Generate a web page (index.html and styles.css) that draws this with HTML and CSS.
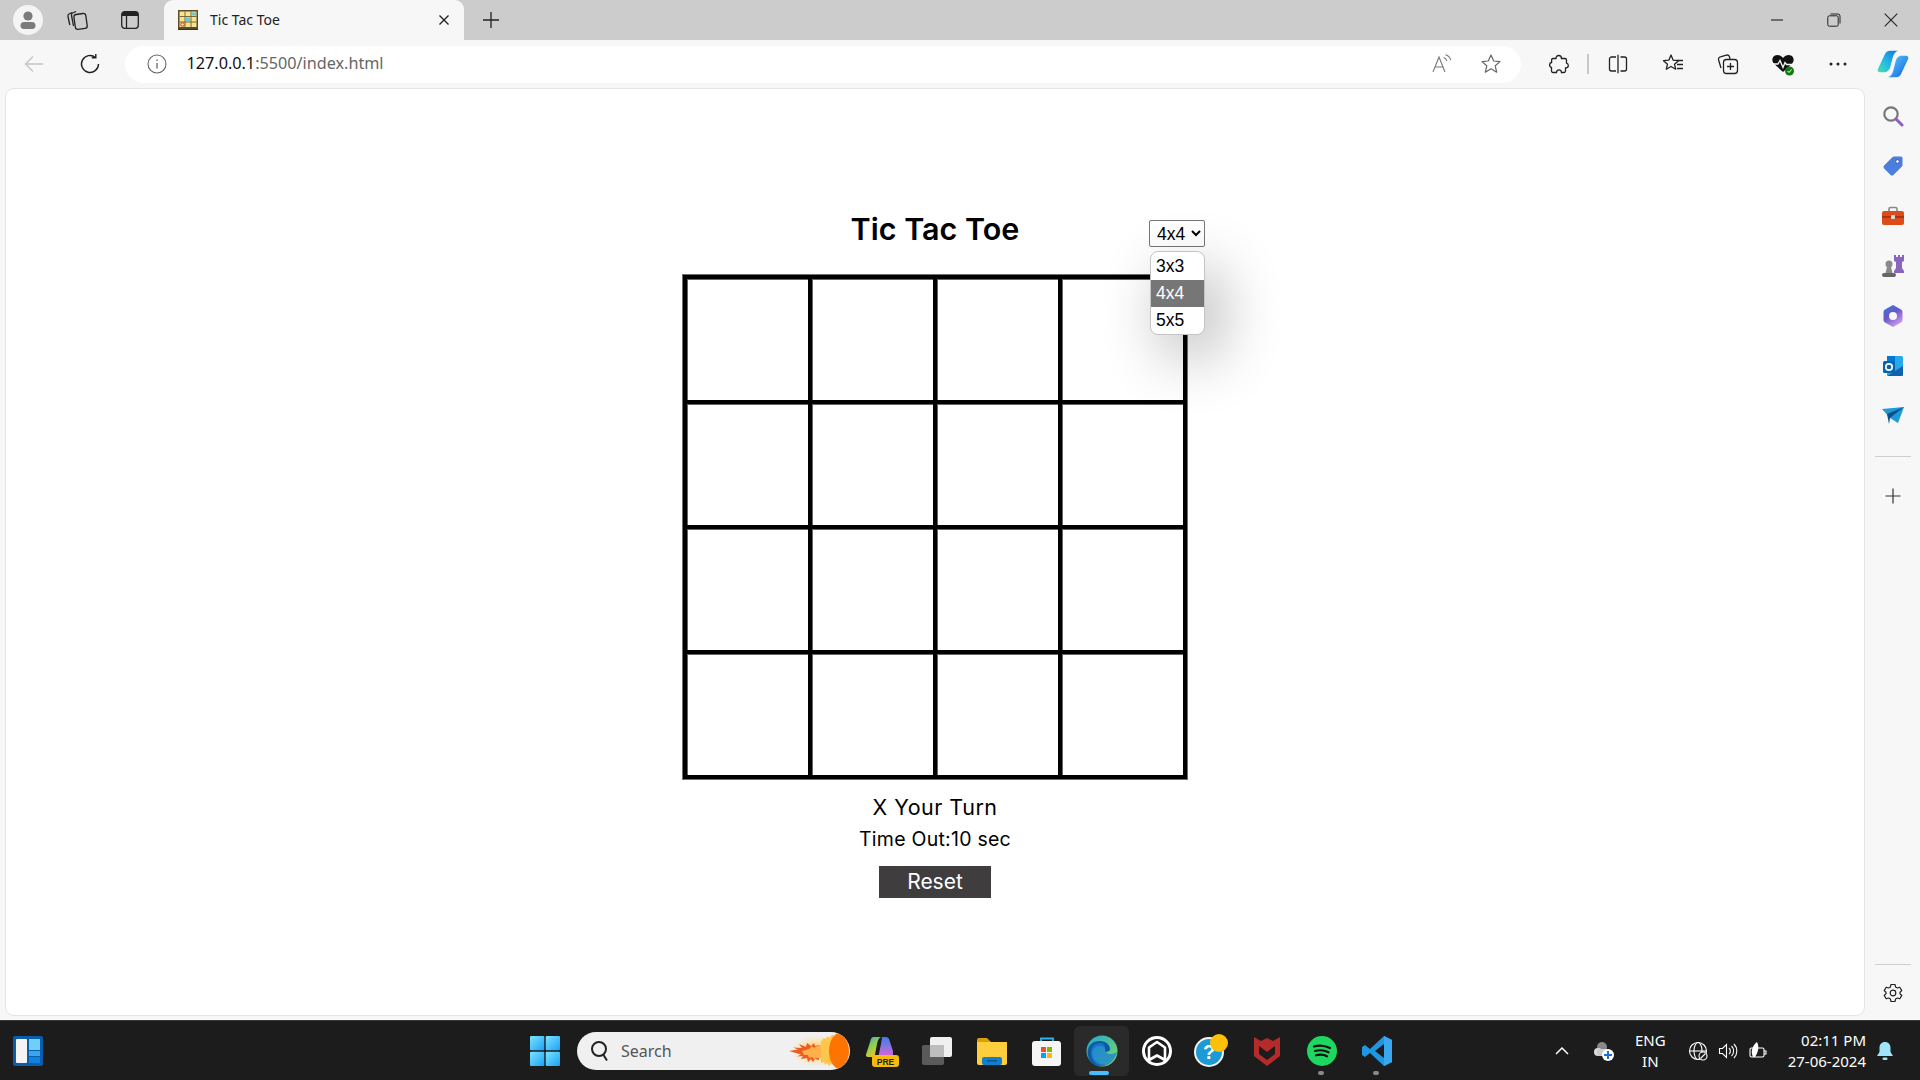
FILE: index.html
```html
<!DOCTYPE html>
<html lang="en">
<head>
<meta charset="utf-8">
<title>Tic Tac Toe</title>
<link rel="stylesheet" href="styles.css">
</head>
<body>
<div class="titlebar">
  <div class="tb-left">
    <span class="tb-btn"><svg width="30" height="30" viewBox="0 0 30 30"><circle cx="15" cy="15" r="15" fill="#f4f4f4"/><circle cx="15" cy="11" r="4.6" fill="#7b7b7b"/><rect x="7.5" y="17" width="15" height="7" rx="3.5" fill="#7b7b7b"/></svg></span>
    <span class="tb-btn"><svg width="22" height="22" viewBox="0 0 22 22" fill="none" stroke="#222" stroke-width="1.3"><path d="M6 3.5 3 5c-1 .5-1.200 1.500-1 2.500l1.800 8.500"/><path d="M10 2.500 6.500 4c-1 .5-1.200 1.500-1 2.500L7.500 17"/><rect x="8.500" y="5" width="12" height="15" rx="2.500" transform="rotate(-8 14 12)"/></svg></span>
    <span class="tb-btn"><svg width="20" height="20" viewBox="0 0 20 20"><rect x="1.700" y="1.700" width="16.600" height="16.600" rx="3" fill="none" stroke="#222" stroke-width="1.300"/><path d="M2 4.500a3 3 0 0 1 3-3h10a3 3 0 0 1 3 3V6H2z" fill="#222"/><path d="M6.500 5v13" stroke="#222" stroke-width="1.300"/></svg></span>
  </div>
  <div class="tab">
    <svg class="favicon" width="20" height="20" viewBox="0 0 20 20"><rect width="20" height="19" fill="#5c4a2a"/><rect x="1.500" y="1.500" width="17" height="15.500" fill="#f6e58d"/><path d="M7 1.500V17M13 1.500V17M1.500 6.500h17M1.500 12h17" stroke="#7a6a3a" stroke-width="1"/><rect x="8" y="7.500" width="4" height="3.500" fill="#6cc5d8"/><rect x="14" y="2.500" width="4" height="3" fill="#6cc5d8"/><circle cx="4.500" cy="14.500" r="1.800" fill="none" stroke="#c83a3a"/><rect y="19" width="20" height="1" fill="#333"/></svg>
    <span class="tab-title">Tic Tac Toe</span>
    <svg class="tab-x" width="12" height="12" viewBox="0 0 12 12"><path d="M1.500 1.500l9 9M10.500 1.500l-9 9" stroke="#222" stroke-width="1.400"/></svg>
  </div>
  <span class="newtab"><svg width="18" height="18" viewBox="0 0 18 18"><path d="M9 1v16M1 9h16" stroke="#222" stroke-width="1.300"/></svg></span>
  <div class="winctl">
    <svg width="14" height="14" viewBox="0 0 14 14"><path d="M1 7h12" stroke="#222" stroke-width="1.100"/></svg>
    <svg width="14" height="14" viewBox="0 0 14 14" fill="none" stroke="#222" stroke-width="1"><rect x=".8" y="2.800" width="10.400" height="10.400" rx="1.500"/><path d="M3.500 1h7.500a2 2 0 0 1 2 2v7.500"/></svg>
    <svg width="14" height="14" viewBox="0 0 14 14"><path d="M.7.7l12.600 12.600M13.300.7.7 13.300" stroke="#222" stroke-width="1.100"/></svg>
  </div>
</div>

<div class="toolbar">
  <span class="nav-btn"><svg width="20" height="18" viewBox="0 0 20 18" fill="none" stroke="#c4c4c4" stroke-width="1.400"><path d="M19 9H1.500M9 1.500 1.500 9 9 16.500"/></svg></span>
  <span class="nav-btn nav-reload"><svg width="22" height="22" viewBox="0 0 22 22" fill="none" stroke="#222" stroke-width="1.400"><path d="M19.500 11A8.500 8.500 0 1 1 16.500 4.500"/><path d="M16.800 1v3.800h-4"/></svg></span>
  <div class="address">
    <svg class="info" width="20" height="20" viewBox="0 0 20 20" fill="none" stroke="#666" stroke-width="1.100"><circle cx="10" cy="10" r="9"/><path d="M10 9v5.500M10 5.500v1.600" stroke-width="1.300"/></svg>
    <span class="url"><span class="url-host">127.0.0.1</span>:5500/index.html</span>
    <svg class="addr-a" width="22" height="20" viewBox="0 0 22 20" fill="none" stroke="#777" stroke-width="1.100"><path d="M1 18 7 3l6 15M3 13h8"/><path d="M11.500 3.500c1.700.5 2.800 1.600 3.300 3.300M13.500 .8c2.800.8 4.500 2.500 5.300 5.300"/></svg>
    <svg class="addr-star" width="22" height="22" viewBox="0 0 22 22" fill="none" stroke="#666" stroke-width="1.200" stroke-linejoin="round"><path d="m11 2 2.700 6 6.300.6-4.800 4.200 1.500 6.400L11 15.800l-5.700 3.400 1.500-6.400L2 8.600 8.300 8z"/></svg>
  </div>
  <div class="tools">
    <span class="tool"><svg width="20" height="20" viewBox="0 0 20 20" fill="none" stroke="#222" stroke-width="1.300"><path d="M7 4.500C7 2.500 8.200 1.500 9.700 1.500s2.800 1 2.800 3h3.500a1.500 1.500 0 0 1 1.500 1.500v3.200c1.500.2 1.800 1.300 1.800 2.300s-.8 2.300-2.300 2.300h-.5v3.200a1.500 1.500 0 0 1-1.500 1.500h-2.500c-.2-2-1.400-2.700-2.500-2.700s-2.300.7-2.500 2.700H4a1.500 1.500 0 0 1-1.500-1.500V13.500C1 13.200.6 12 .6 11s.7-2.300 2-2.500V6A1.500 1.500 0 0 1 4 4.500z"/></svg></span>
    <span class="tool-div"></span>
    <span class="tool"><svg width="20" height="20" viewBox="0 0 20 20" fill="none" stroke="#222" stroke-width="1.300"><path d="M8 3H3.500A2 2 0 0 0 1.500 5v10a2 2 0 0 0 2 2H8M12.500 3h4a2 2 0 0 1 2 2v10a2 2 0 0 1-2 2h-4M10 .8v18.400"/></svg></span>
    <span class="tool"><svg width="22" height="22" viewBox="0 0 22 22" fill="none" stroke="#222" stroke-width="1.300" stroke-linejoin="round"><path d="M9 2l2.200 5.200 5.300.5-4 3.500 1.200 5-4.700-2.700-4.700 2.700 1.200-5-4-3.500 5.300-.5z"/><path d="M15 7.500h6M15 11.500h6M15 15.500h6"/></svg></span>
    <span class="tool"><svg width="22" height="22" viewBox="0 0 22 22" fill="none" stroke="#222" stroke-width="1.300"><path d="M4 15 1.600 7A2.500 2.500 0 0 1 3.400 3.800l6-1.700a2.500 2.500 0 0 1 3 1.500L13 6"/><rect x="6.500" y="6.500" width="14" height="14" rx="3"/><path d="M13.500 10v7M10 13.500h7"/></svg></span>
    <span class="tool"><svg width="24" height="24" viewBox="0 0 24 24"><path d="M12 20 2.800 11.500C.5 9 1 5 4 3.500c2.800-1.300 6 0 8 2.500 2-2.500 5.200-3.800 8-2.500 3 1.500 3.500 5.500 1.200 8z" fill="#111"/><path d="M1 12h6l2-3.500 3 7 2-5 1.500 2H23" fill="none" stroke="#f7f7f7" stroke-width="1.300"/><circle cx="18.500" cy="19" r="4.500" fill="#107c10"/><path d="m16.500 19 1.500 1.500 2.500-3" fill="none" stroke="#fff"/></svg></span>
    <span class="tool"><svg width="18" height="4" viewBox="0 0 18 4" fill="#222"><circle cx="2" cy="2" r="1.500"/><circle cx="9" cy="2" r="1.500"/><circle cx="16" cy="2" r="1.500"/></svg></span>
    <span class="tool"><svg width="32" height="28" viewBox="0 0 32 28"><defs><linearGradient id="cp1" x1="0" y1="1" x2="1" y2="0"><stop offset="0" stop-color="#46e0b0"/><stop offset=".5" stop-color="#20b4e8"/><stop offset="1" stop-color="#1a6fd6"/></linearGradient><linearGradient id="cp2" x1="0" y1="0" x2="1" y2="1"><stop offset="0" stop-color="#5cd0f8"/><stop offset=".6" stop-color="#2f8cf0"/><stop offset="1" stop-color="#1f4fd8"/></linearGradient></defs><path d="M13 .8h8c-3 1-4.500 3.500-5.500 7.500l-2 8c-.8 3.500-3 6-6 6H2.800C1.200 22.300.3 20.800.8 19.300L7.500 5C8.500 2 11 .8 13 .8z" fill="url(#cp1)"/><path d="M19 27.200h-8c3-1 4.500-3.500 5.500-7.500l2-8c.8-3.500 3-6 6-6h4.700c1.600 0 2.500 1.500 2 3L24.500 23c-1 3-3.500 4.200-5.500 4.200z" fill="url(#cp2)"/></svg></span>
  </div>
</div>

<div class="middle">
  <main class="page">
    <div class="game">
      <div class="head">
        <h1 class="title">Tic Tac Toe</h1>
        <select class="size"><option>3x3</option><option selected>4x4</option><option>5x5</option></select>
        <ul class="popup">
          <li class="opt">3x3</li>
          <li class="opt opt-on">4x4</li>
          <li class="opt">5x5</li>
        </ul>
      </div>
      <div class="board">
        <div class="cell"></div><div class="cell"></div><div class="cell"></div><div class="cell"></div>
        <div class="cell"></div><div class="cell"></div><div class="cell"></div><div class="cell"></div>
        <div class="cell"></div><div class="cell"></div><div class="cell"></div><div class="cell"></div>
        <div class="cell"></div><div class="cell"></div><div class="cell"></div><div class="cell"></div>
      </div>
      <p class="turn">X Your Turn</p>
      <p class="timer">Time Out:10 sec</p>
      <button class="reset">Reset</button>
    </div>
  </main>
  <aside class="side">
    <div class="side-top">
      <span class="side-btn"><svg width="22" height="22" viewBox="0 0 22 22" fill="none"><circle cx="9" cy="9" r="6.700" stroke="#777" stroke-width="2.200"/><path d="m14 14 6 6" stroke="#8e5fc0" stroke-width="3" stroke-linecap="round"/></svg></span>
      <span class="side-btn"><svg width="22" height="22" viewBox="0 0 22 22"><path d="M12 1.500h7a1.500 1.500 0 0 1 1.500 1.500v7a2 2 0 0 1-.6 1.400l-8.500 8.500a2 2 0 0 1-2.800 0l-6.500-6.500a2 2 0 0 1 0-2.800L10.600 2.100A2 2 0 0 1 12 1.500z" fill="#4a7fe0"/><circle cx="15.500" cy="6.500" r="1.800" fill="#fff" stroke="#2a4fa0" stroke-width=".8"/></svg></span>
      <span class="side-btn"><svg width="24" height="20" viewBox="0 0 24 20"><path d="M8 5V3a1.500 1.500 0 0 1 1.500-1.500h5A1.500 1.500 0 0 1 16 3v2" fill="none" stroke="#888" stroke-width="1.600"/><rect x="1" y="5" width="22" height="14" rx="2" fill="#dd4b1a"/><rect x="1" y="10" width="22" height="2" fill="#a8350f"/><rect x="10" y="9" width="4" height="4" rx="1" fill="#d8d8d8"/></svg></span>
      <span class="side-btn"><svg width="24" height="24" viewBox="0 0 24 24"><path d="M14 1h2v2h2V1h2v2h2V1h2v6l-2 1v6l2 3v2H14v-2l2-3V8l-2-1z" fill="#8a64bd" transform="translate(-1 0)"/><circle cx="8" cy="10" r="3.500" fill="#8a8a8a"/><path d="M6 13h4l1.500 6h-7z" fill="#8a8a8a"/><rect x="1" y="19" width="14" height="4" rx="2" fill="#666"/></svg></span>
      <span class="side-btn"><svg width="22" height="24" viewBox="0 0 22 24"><defs><linearGradient id="m1" x1="0" y1="0" x2=".6" y2="1"><stop offset="0" stop-color="#2f7fe0"/><stop offset=".5" stop-color="#6a55c8"/><stop offset="1" stop-color="#c99af0"/></linearGradient></defs><path d="M11 1 19 5.500a3 3 0 0 1 1.500 2.600v7.800A3 3 0 0 1 19 18.500L11 23 3 18.500a3 3 0 0 1-1.500-2.600V8.100A3 3 0 0 1 3 5.500z" fill="url(#m1)"/><circle cx="11" cy="12" r="4" fill="#f7f7f7"/></svg></span>
      <span class="side-btn"><svg width="22" height="22" viewBox="0 0 22 22"><rect x="5" y="1" width="16" height="20" rx="1.500" fill="#28a8ea"/><rect x="5" y="1" width="8" height="7" fill="#0078d4"/><path d="M5 21 21 11v8.500a1.500 1.500 0 0 1-1.500 1.500z" fill="#0f62ae"/><rect x="1" y="6" width="12" height="12" rx="1.500" fill="#0364b8"/><circle cx="7" cy="12" r="3.200" fill="none" stroke="#fff" stroke-width="1.700"/></svg></span>
      <span class="side-btn"><svg width="22" height="20" viewBox="0 0 22 20"><path d="M0 3 22 1 16 17 8 12z" fill="#1e9ad6"/><path d="M5 8 22 1 8 12l-1 6z" fill="#0b4f8a"/></svg></span>
      <span class="side-div"></span>
      <span class="side-btn"><svg width="16" height="16" viewBox="0 0 16 16"><path d="M8 .5v15M.5 8h15" stroke="#333" stroke-width="1.200"/></svg></span>
    </div>
    <div class="side-bottom">
      <span class="side-div side-div-b"></span>
      <span class="side-btn"><svg width="20" height="20" viewBox="0 0 20 20" fill="none" stroke="#222" stroke-width="1.200" stroke-linejoin="round"><path d="M8 1.500h4l.6 2.500 1.800 1 2.400-.8 2 3.400-1.800 1.700v1.400l1.800 1.700-2 3.400-2.400-.8-1.800 1-.6 2.500H8l-.6-2.500-1.800-1-2.400.8-2-3.400 1.800-1.700V9.300L1.200 7.600l2-3.400 2.400.8 1.800-1z"/><circle cx="10" cy="10" r="2.800"/></svg></span>
    </div>
  </aside>
</div>

<footer class="taskbar">
  <span class="widgets"><svg width="30" height="30" viewBox="0 0 30 30"><rect width="30" height="30" rx="2" fill="#0b5cab"/><rect x="3" y="3" width="11" height="24" rx="1" fill="#f4f4f4"/><rect x="16" y="3" width="11" height="11" fill="#6fd0f7"/><rect x="16" y="15" width="11" height="5" fill="#37a6ee"/><rect x="16" y="21" width="11" height="6" fill="#0f82e0"/></svg></span>
  <div class="task-center">
    <span class="task-btn task-win"><svg width="30" height="30" viewBox="0 0 30 30"><defs><linearGradient id="w1" x1="0" y1="0" x2="1" y2="1"><stop offset="0" stop-color="#7de3ff"/><stop offset="1" stop-color="#1aa3f5"/></linearGradient></defs><rect width="14.300" height="14.300" rx="1" fill="url(#w1)"/><rect x="15.700" width="14.300" height="14.300" rx="1" fill="url(#w1)"/><rect y="15.700" width="14.300" height="14.300" rx="1" fill="url(#w1)"/><rect x="15.700" y="15.700" width="14.300" height="14.300" rx="1" fill="url(#w1)"/></svg></span>
    <div class="search">
      <svg class="search-ico" width="20" height="22" viewBox="0 0 20 22" fill="none" stroke="#222" stroke-width="2"><circle cx="9" cy="9" r="7"/><path d="m13.500 15 3.500 5.500"/></svg>
      <span class="search-text">Search</span>
      <svg class="flame" width="62" height="38" viewBox="0 0 62 38"><defs><radialGradient id="fh" cx=".6" cy=".5" r=".6"><stop offset=".4" stop-color="#ffd98a"/><stop offset="1" stop-color="#f0f0f0" stop-opacity="0"/></radialGradient></defs><rect x="0" y="4" width="46" height="30" fill="url(#fh)"/><path d="M1 19l9-1.500-5-2 9 .5-3-4 7 3 1-4 4 3 3-3 1 3 4-1v15l-4-1-2 3-2-3-3 3-1-4-6 1 2-3-6 .5 4-2z" fill="#ef5a1e"/><path d="M14 19l7-2 3-3 2 2 3-2 4-1v13l-4 0-3 1-2-2-3 1-1-3-4 0z" fill="#ffb04a"/><path d="M33 9l3-3 1 1 3-3 1 2 3-3 2 0v30l-3-1-2 2-2-3-2 2-1-3-3 1z" fill="#ffc64d"/><path d="M50 1c8 3 11 11 11 18s-3 15-11 18c-6-3-9-10-9-18s3-15 9-18z" fill="#ff7400"/></svg>
    </div>
    <span class="task-btn"><svg width="34" height="34" viewBox="0 0 34 34"><defs><linearGradient id="c2" x1="0" y1="0" x2=".6" y2="1"><stop offset="0" stop-color="#28a8ea"/><stop offset=".5" stop-color="#8fd04a"/><stop offset="1" stop-color="#f2c02e"/></linearGradient><linearGradient id="c3" x1="0" y1="0" x2="0" y2="1"><stop offset="0" stop-color="#3a7fe8"/><stop offset="1" stop-color="#d867d8"/></linearGradient></defs><path d="M9 3h7c-2.500 1-3 3-4 7L9.500 23H3c-1.500 0-2.500-1-2-2.500L6 5c.5-1.500 1.500-2 3-2z" fill="url(#c2)"/><path d="M17 3h4c1.500 0 2.500 1 3 2l4 12v5H13.500l2.500-12c.5-3 1-6 1-7z" fill="url(#c3)"/><rect x="7" y="21" width="27" height="12" rx="3" fill="#f6bb0c"/><text class="pre" x="20.500" y="30.500" text-anchor="middle">PRE</text></svg></span>
    <span class="task-btn"><svg width="30" height="30" viewBox="0 0 30 30"><rect y="9" width="22" height="20" rx="2" fill="#5a5a5a"/><rect x="8" y="1" width="22" height="20" rx="2" fill="#f0f0f0"/><rect x="8" y="9" width="14" height="12" fill="#bdbdbd"/></svg></span>
    <span class="task-btn"><svg width="30" height="28" viewBox="0 0 30 28"><path d="M0 3a2 2 0 0 1 2-2h8l4 4H0z" fill="#d9a200"/><path d="M0 5h30v21a2 2 0 0 1-2 2H2a2 2 0 0 1-2-2z" fill="#ffce3d"/><rect x="5" y="20" width="20" height="8" rx="2" fill="#0f7fd0"/><rect x="10" y="23" width="10" height="1.500" fill="#0a4f88"/></svg></span>
    <span class="task-btn"><svg width="30" height="30" viewBox="0 0 30 30"><path d="M9 6V2.500h12V6" fill="none" stroke="#2bb4ef" stroke-width="1.800"/><rect y="5" width="29" height="25" rx="3" fill="#f6f6f6"/><rect x="9" y="11" width="5" height="5" fill="#f25022"/><rect x="15" y="11" width="5" height="5" fill="#7fba00"/><rect x="9" y="17" width="5" height="5" fill="#00a4ef"/><rect x="15" y="17" width="5" height="5" fill="#ffb900"/></svg></span>
    <span class="task-btn task-active"><svg width="32" height="32" viewBox="0 0 32 32"><defs><linearGradient id="e1" x1="0" y1="0" x2="1" y2="1"><stop offset="0" stop-color="#1fa6d8"/><stop offset="1" stop-color="#7fdc5a"/></linearGradient></defs><circle cx="16" cy="16" r="15.500" fill="url(#e1)"/><path d="M3 24C-1 14 4 6 14 6c6 0 10 4 10 8 0 2-2 3-5 3 1-3-1-6-5-6-6 0-9 5-7 11 2 5 7 8 13 8-8 3-14 0-17-6z" fill="#0c59a4"/><path d="M5 18c0-6 4-10 9-10 4 0 5 3 5 5-1 6 6 8 12 4-2 8-8 14-15 14-6 0-11-6-11-13z" fill="#1a7fd8" opacity=".75"/></svg><span class="active-pill"></span></span>
    <span class="task-btn"><svg width="30" height="30" viewBox="0 0 30 30" fill="none"><circle cx="15" cy="15" r="13.500" stroke="#fff" stroke-width="3"/><path d="M15 6 23 11.500V24l-8-4.500L7 24V11.500z" stroke="#fff" stroke-width="2.600" stroke-linejoin="round"/></svg></span>
    <span class="task-btn"><svg width="36" height="34" viewBox="0 0 36 34"><circle cx="15" cy="18" r="15" fill="#f4f4f4"/><circle cx="15" cy="18" r="13" fill="#1b9ad6"/><text class="help" x="15" y="25" text-anchor="middle">?</text><circle cx="25" cy="9" r="9" fill="#ffc107"/></svg></span>
    <span class="task-btn"><svg width="28" height="32" viewBox="0 0 28 32"><path d="M1 2 8 6l6-3 6 3 7-4v19L14 31 1 21z" fill="#b52a2a"/><path d="M6 11l8 6 8-6v8l-8 6-8-6z" fill="#1c1c1c"/></svg></span>
    <span class="task-btn task-running"><svg width="30" height="30" viewBox="0 0 30 30" fill="none"><circle cx="15" cy="15" r="15" fill="#1ed760"/><path d="M7 10.500c5-1.500 11-1 16 1.500M8 15c4.500-1.200 9.500-.8 13.500 1.300M9 19.300c3.800-1 8-.7 11 1" stroke="#111" stroke-width="2.200" stroke-linecap="round"/></svg><span class="run-dot"></span></span>
    <span class="task-btn task-running"><svg width="30" height="30" viewBox="0 0 30 30"><path d="M22 0 30 4v22l-8 4L8 17l-5 4-3-2v-8l3-2 5 4z" fill="#2196e0"/><path d="M22 8 13 15l9 7z" fill="#1c1c1c"/><path d="M22 0v30l8-4V4z" fill="#3aa8f0"/></svg><span class="run-dot"></span></span>
  </div>
  <div class="tray">
    <svg class="tray-chev" width="14" height="9" viewBox="0 0 14 9" fill="none" stroke="#fff" stroke-width="1.500"><path d="m1 8 6-6 6 6"/></svg>
    <svg class="tray-cloud" width="22" height="22" viewBox="0 0 22 22"><circle cx="9" cy="7" r="5" fill="#888"/><circle cx="5" cy="12" r="4" fill="#ddd"/><rect x="4" y="9" width="10" height="7" fill="#ccc"/><circle cx="15" cy="15" r="6" fill="#fff"/><path d="M15 11v8M11 15h8" stroke="#1b6fd0" stroke-width="2"/></svg>
    <div class="lang"><span>ENG</span><span>IN</span></div>
    <svg width="20" height="20" viewBox="0 0 20 20" fill="none" stroke="#fff" stroke-width="1.100"><circle cx="10" cy="10" r="8.500"/><ellipse cx="10" cy="10" rx="4" ry="8.500"/><path d="M1.500 10h17"/><circle cx="15" cy="15" r="4" fill="#1c1c1c"/><path d="m12.500 17.500 5-5"/></svg>
    <svg width="20" height="20" viewBox="0 0 20 20" fill="none" stroke="#fff" stroke-width="1.100"><path d="M1.500 7.500v5h3l4 4v-13l-4 4z"/><path d="M11 7a4 4 0 0 1 0 6M13.500 5a7 7 0 0 1 0 10M16 3a10 10 0 0 1 0 14"/></svg>
    <svg width="20" height="20" viewBox="0 0 20 20" fill="none" stroke="#fff" stroke-width="1.100"><rect x="2" y="7" width="14" height="9" rx="1.500"/><path d="M16 10h2v3h-2"/><path d="M5 16C2 10 5 4 9 1c2 4 2 9-2 15z" fill="#fff" stroke="none"/></svg>
    <div class="clock"><span>02:11 PM</span><span>27-06-2024</span></div>
    <svg class="bell" width="18" height="20" viewBox="0 0 18 20"><path d="M9 1c3.500 0 5.500 2.500 5.500 6v4l2.500 4H1l2.500-4V7C3.500 3.500 5.500 1 9 1z" fill="#9fe4fb"/><rect x="6.500" y="16.500" width="5" height="2.500" rx="1.200" fill="#9fe4fb"/></svg>
  </div>
</footer>
</body>
</html>
```

FILE: styles.css
```css
* { box-sizing: border-box; }
html, body { margin: 0; padding: 0; height: 100%; }
body {
  display: flex;
  flex-direction: column;
  width: 1920px;
  height: 1080px;
  overflow: hidden;
  background: #f7f7f7;
  font-family: "Noto Sans", "Open Sans", sans-serif;
}
svg { display: block; flex: none; }

/* title bar */
.titlebar { height: 40px; flex: none; display: flex; align-items: center; background: #cccccc; }
.tb-left { display: flex; align-items: center; padding-left: 13px; width: 164px; }
.tb-btn { display: flex; justify-content: center; width: 30px; margin-right: 23px; }
.tb-btn:first-child { margin-right: 19px; }
.tb-btn:last-child { margin-right: 0; }
.tab { width: 300px; display: flex; align-items: center; background: #f7f7f7; border-radius: 9px 9px 0 0; padding: 0 14px; align-self: stretch; }
.favicon { margin-right: 12px; }
.tab-title { font-size: 14px; line-height: 18px; padding-bottom: 1px; color: #222; flex: 1; }
.newtab { width: 52px; display: flex; justify-content: center; margin-left: 1px; }
.winctl { margin-left: auto; display: flex; align-items: center; gap: 43px; padding-right: 22px; }

/* toolbar */
.toolbar { height: 48px; flex: none; display: flex; align-items: center; background: #f7f7f7; padding-left: 7px; }
.nav-btn { width: 55px; display: flex; justify-content: center; }
.nav-reload { padding-left: 2px; }
.address { width: 1402px; height: 37px; margin-left: 8px; background: #fff; border-radius: 19px; display: flex; align-items: center; padding-left: 22px; }
.info { margin-right: 20px; }
.url { flex: 1; font-size: 16.200px; line-height: 22px; padding-bottom: 2px; color: #666; }
.url-host { color: #111; }
.addr-a { margin-right: 26px; }
.addr-star { margin-right: 19px; }
.tools { display: flex; align-items: center; margin-left: 10px; }
.tool { width: 55px; display: flex; justify-content: center; }
.tool-div { width: 2px; height: 20px; background: #c8c8c8; margin: 0 1px; }

/* middle */
.middle { flex: 1; display: flex; min-height: 0; padding-bottom: 4px; }
.page { width: 1860px; margin-left: 5px; background: #fff; border: 1px solid #e4e4e4; border-radius: 9px; display: flex; justify-content: center; padding-top: 120px; }
.game { width: 506px; display: flex; flex-direction: column; align-items: center; }
.head { width: 100%; height: 65px; position: relative; display: flex; justify-content: center; }
.title { margin: 0; font: 600 30.500px/40px Inter, sans-serif; color: #000; }
.size { position: absolute; left: 467px; top: 11px; width: 56px; height: 27px; font: 17.500px "Liberation Sans", Arial, sans-serif; background: #fff; color: #000; border: 1px solid #767676; border-radius: 2px; padding: 0 0 0 3px; }
.popup { position: absolute; left: 468px; top: 42px; width: 55px; height: 84px; margin: 0; padding: 1px 0 0; list-style: none; background: #fff; border: 1px solid #c4c4c4; border-radius: 8px; overflow: hidden; box-shadow: 14px 20px 60px rgba(0,0,0,.3); z-index: 2; }
.opt { height: 27px; padding-left: 5px; font: 17.500px/27px "Liberation Sans", Arial, sans-serif; color: #000; }
.opt-on { background: #767676; color: #fff; }
.board { display: grid; grid-template-columns: repeat(4, 121px); grid-auto-rows: 121px; gap: 4px; padding: 4px; background: #000; border: 1px solid #707070; width: 506px; height: 506px; }
.cell { background: #fff; border-top: 1px solid #666; border-left: 1px solid #666; }
.turn { margin: 11px 0 0; font: 400 21.500px/32px Inter, sans-serif; letter-spacing: .5px; color: #000; }
.timer { margin: 0; font: 400 19.500px/32px Inter, sans-serif; letter-spacing: .25px; color: #000; }
.reset { margin-top: 11px; width: 112px; height: 32px; border: 0; padding: 0; background: #3f3d3e; color: #fff; font: 400 21px/32px Inter, sans-serif; }

/* sidebar */
.side { flex: 1; display: flex; flex-direction: column; justify-content: space-between; align-items: center; }
.side-top, .side-bottom { display: flex; flex-direction: column; align-items: center; width: 100%; }
.side-btn { height: 50px; width: 100%; display: flex; align-items: center; justify-content: center; }
.side-top { padding-top: 3px; }
.side-div { width: 36px; height: 1px; background: #cfcfcf; margin: 15px 0 14px; }
.side-div-b { margin: 0 0 3px; }
.side-bottom { margin-bottom: -2px; }

/* taskbar */
.taskbar { height: 60px; flex: none; display: flex; align-items: center; background: #1c1c1c; border-top: 1px solid #3a3a3a; }
.widgets { width: 56px; display: flex; justify-content: center; }
.task-center { display: flex; align-items: center; margin-left: 461px; }
.task-btn { position: relative; width: 55px; height: 50px; display: flex; align-items: center; justify-content: center; }
.task-active { background: #2a2a2a; border-radius: 6px; }
.active-pill { position: absolute; left: 15px; bottom: 1px; width: 20px; height: 4px; border-radius: 2px; background: #47bfff; }
.run-dot { position: absolute; left: 24px; bottom: 1px; width: 6px; height: 4px; border-radius: 2px; background: #8a8a8a; }
.pre { font: 700 8.500px "Liberation Sans", sans-serif; fill: #222; }
.help { font: 700 20px "Liberation Sans", sans-serif; fill: #fff; }
.search { width: 273px; height: 38px; border-radius: 19px; background: #f0f0f0; display: flex; align-items: center; padding-left: 13px; margin: 0 4px 0 5px; overflow: hidden; }
.search-text { flex: 1; margin-left: 11px; font-size: 16px; color: #555; }
.tray { margin-left: auto; display: flex; align-items: center; color: #fff; font-size: 15px; padding-right: 26px; }
.tray svg { margin-right: 10px; }
.tray .tray-chev { margin-right: 24px; }
.tray .tray-cloud { margin-right: 20px; }
.tray .bell { margin: 0 0 0 10px; }
.lang { display: flex; flex-direction: column; align-items: center; line-height: 21px; margin-right: 22px; }
.clock { display: flex; flex-direction: column; align-items: flex-end; line-height: 21px; margin-left: 10px; }
```
